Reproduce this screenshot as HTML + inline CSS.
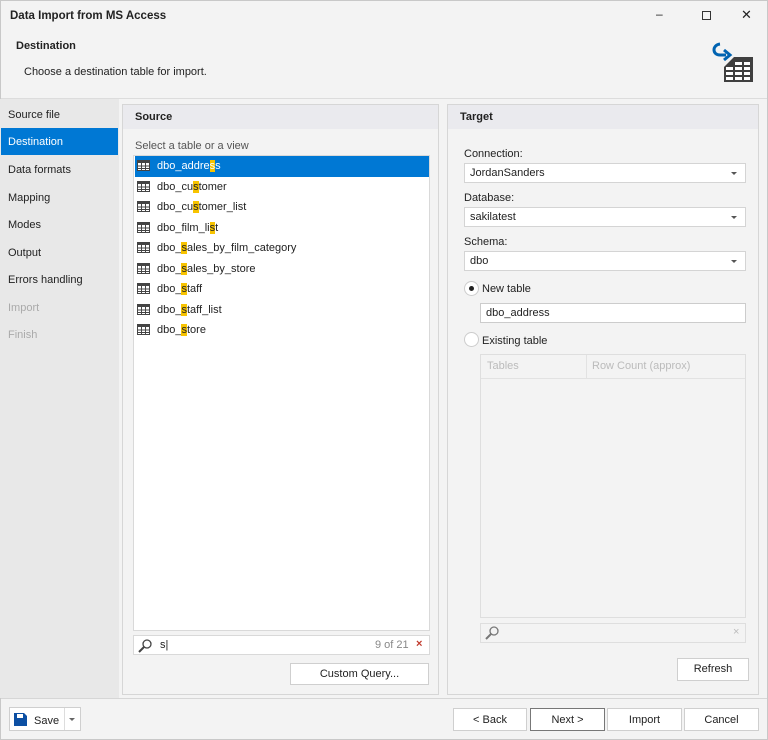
<!DOCTYPE html>
<html><head><meta charset="utf-8"><style>
*{box-sizing:border-box;margin:0;padding:0}
body{width:768px;height:740px;background:#f3f3f3;font-family:"Liberation Sans",sans-serif;font-size:11px;color:#222;position:relative;overflow:hidden}
.a{position:absolute}
.win{left:0;top:0;width:768px;height:740px;border:1px solid #c8c8c8}
.nav div{position:absolute;left:1px;width:117px;height:27px;line-height:27px;padding-left:7px}
.panel{border:1px solid #d6d6d6;background:#f3f3f3}
.ph{background:#eaeaee;height:24px;line-height:24px;padding-left:12px;font-weight:bold}
.box{background:#fff;border:1px solid #d9d9d9}
.btn{background:#fff;border:1px solid #cfcfcf;text-align:center;line-height:20px}
.row{position:absolute;left:1px;width:294px;height:21px;line-height:21px;padding-left:22px}
.row svg{position:absolute;left:2px;top:4px}
.hl{background:#f7c300}
.combo{background:#fff;border:1px solid #d4d4d4;height:20px;line-height:18px;padding-left:5px}
.dd:after{content:"";position:absolute;right:8px;top:8px;border-left:3px solid transparent;border-right:3px solid transparent;border-top:3px solid #555}
.radio{width:15px;height:15px;border-radius:50%;border:1px solid #ccc;background:#fff}
</style></head><body>
<div class="a win"></div>
<div class="a" style="left:10px;top:10px;font-weight:bold;font-size:11.5px">Data Import from MS Access</div>
<div class="a" style="left:656px;top:7px;font-size:12px">–</div>
<div class="a" style="left:702px;top:11px;width:9px;height:9px;border:1px solid #333"></div>
<div class="a" style="left:741px;top:7px;font-size:13px">✕</div>
<div class="a" style="left:16px;top:40px;font-weight:bold">Destination</div>
<div class="a" style="left:24px;top:66px">Choose a destination table for import.</div>
<svg class="a" style="left:710px;top:42px" width="46" height="42" viewBox="0 0 46 42">
<path d="M10 2 C2 3 2 13 10 13 L16 13" fill="none" stroke="#0063b1" stroke-width="3"/>
<path d="M14 8 L20 13 L14 18" fill="none" stroke="#0063b1" stroke-width="3"/>
<path d="M14 25 L24 15 L43 15 L43 40 L14 40 Z" fill="#3f3f3f"/>
<g fill="#fff"><rect x="16" y="25" width="7" height="3"/><rect x="25" y="25" width="7" height="3"/><rect x="34" y="25" width="6" height="3"/><rect x="16" y="30" width="7" height="3"/><rect x="25" y="30" width="7" height="3"/><rect x="34" y="30" width="6" height="3"/><rect x="16" y="35" width="7" height="3"/><rect x="25" y="35" width="7" height="3"/><rect x="34" y="35" width="6" height="3"/><rect x="25" y="20" width="7" height="3"/><rect x="34" y="20" width="6" height="3"/></g>
</svg>
<div class="a" style="left:1px;top:98px;width:766px;height:1px;background:#dcdcdc"></div>
<div class="a nav" style="left:0;top:99px;width:119px;height:599px;background:#e8e8e8">
<div style="top:1px;line-height:31px">Source file</div>
<div style="top:29px;background:#0078d4;color:#fff;line-height:29px">Destination</div>
<div style="top:56px;line-height:30px">Data formats</div>
<div style="top:84px;line-height:30px">Mapping</div>
<div style="top:111px;line-height:30px">Modes</div>
<div style="top:139px;line-height:30px">Output</div>
<div style="top:166px;line-height:30px">Errors handling</div>
<div style="top:194px;color:#aaa;line-height:30px">Import</div>
<div style="top:221px;color:#aaa;line-height:30px">Finish</div>
</div>
<div class="a panel" style="left:122px;top:104px;width:317px;height:591px">
<div class="ph">Source</div></div>
<div class="a" style="left:135px;top:140px;color:#555">Select a table or a view</div>
<div class="a box" style="left:133px;top:155px;width:297px;height:476px">
<svg width="0" height="0" style="position:absolute"><defs><g id="g"><rect x=".5" y=".5" width="12" height="10" fill="#fff" stroke="#444"/><rect x=".5" y=".5" width="12" height="2.5" fill="#444"/><path d="M4.5 3V11M8.5 3V11M1 6H12M1 8.5H12" stroke="#444"/></g></defs></svg>
<div class="row" style="top:0;background:#0078d4;color:#fff"><svg width="14" height="12"><use href="#g"/></svg>dbo_addre<span class="hl">s</span>s</div>
<div class="row" style="top:21px"><svg width="14" height="12"><use href="#g"/></svg>dbo_cu<span class="hl">s</span>tomer</div>
<div class="row" style="top:41px"><svg width="14" height="12"><use href="#g"/></svg>dbo_cu<span class="hl">s</span>tomer_list</div>
<div class="row" style="top:62px"><svg width="14" height="12"><use href="#g"/></svg>dbo_film_li<span class="hl">s</span>t</div>
<div class="row" style="top:82px"><svg width="14" height="12"><use href="#g"/></svg>dbo_<span class="hl">s</span>ales_by_film_category</div>
<div class="row" style="top:103px"><svg width="14" height="12"><use href="#g"/></svg>dbo_<span class="hl">s</span>ales_by_store</div>
<div class="row" style="top:123px"><svg width="14" height="12"><use href="#g"/></svg>dbo_<span class="hl">s</span>taff</div>
<div class="row" style="top:144px"><svg width="14" height="12"><use href="#g"/></svg>dbo_<span class="hl">s</span>taff_list</div>
<div class="row" style="top:164px"><svg width="14" height="12"><use href="#g"/></svg>dbo_<span class="hl">s</span>tore</div>
</div>
<div class="a box" style="left:133px;top:635px;width:297px;height:20px">
<svg class="a" style="left:4px;top:3px" width="14" height="14"><circle cx="9" cy="5" r="4" fill="none" stroke="#444" stroke-width="1.3"/><path d="M6 8L1 13" stroke="#444" stroke-width="2"/></svg>
<span class="a" style="left:26px;top:3px">s|</span>
<span class="a" style="left:241px;top:3px;color:#888">9 of 21</span>
<span class="a" style="left:282px;top:2px;color:#c0392b;font-weight:bold">×</span></div>
<div class="a btn" style="left:290px;top:663px;width:139px;height:22px">Custom Query...</div>

<div class="a panel" style="left:447px;top:104px;width:312px;height:591px">
<div class="ph">Target</div></div>
<div class="a" style="left:464px;top:148px">Connection:</div>
<div class="a combo dd" style="left:464px;top:163px;width:282px">JordanSanders</div>
<div class="a" style="left:464px;top:192px">Database:</div>
<div class="a combo dd" style="left:464px;top:207px;width:282px">sakilatest</div>
<div class="a" style="left:464px;top:236px">Schema:</div>
<div class="a combo dd" style="left:464px;top:251px;width:282px">dbo</div>
<div class="a radio" style="left:464px;top:281px"><div class="a" style="left:4px;top:4px;width:5px;height:5px;border-radius:50%;background:#222"></div></div>
<div class="a" style="left:482px;top:283px">New table</div>
<div class="a combo" style="left:480px;top:303px;width:266px;border-color:#ccc">dbo_address</div>
<div class="a radio" style="left:464px;top:332px"></div>
<div class="a" style="left:482px;top:335px">Existing table</div>
<div class="a" style="left:480px;top:354px;width:266px;height:264px;border:1px solid #dedede;background:#f3f3f3">
<div style="height:24px;border-bottom:1px solid #e2e2e2;color:#bbb;line-height:23px;position:relative"><span style="position:absolute;left:6px">Tables</span><span style="position:absolute;left:105px;top:0;height:23px;border-left:1px solid #e2e2e2"></span><span style="position:absolute;left:111px">Row Count (approx)</span></div></div>
<div class="a" style="left:480px;top:623px;width:266px;height:20px;border:1px solid #dedede;background:#f3f3f3">
<svg class="a" style="left:4px;top:2px" width="14" height="14"><circle cx="9" cy="5" r="4" fill="none" stroke="#777" stroke-width="1.3"/><path d="M6 8L1 13" stroke="#777" stroke-width="2"/></svg>
<span class="a" style="left:252px;top:2px;color:#bbb">×</span></div>
<div class="a btn" style="left:677px;top:658px;width:72px;height:23px">Refresh</div>

<div class="a" style="left:1px;top:698px;width:766px;height:1px;background:#d6d6d6"></div>
<div class="a btn" style="left:9px;top:707px;width:72px;height:24px;text-align:left">
<svg class="a" style="left:4px;top:5px" width="13" height="13"><path d="M0 0H10L13 3V13H0Z" fill="#0c4fa3"/><rect x="3" y="1" width="6" height="4" fill="#fff"/></svg>
<span class="a" style="left:24px;top:3px">Save</span>
<span class="a" style="left:54px;top:0;height:22px;border-left:1px solid #ddd"></span>
<span class="a" style="left:59px;top:10px;border-left:3px solid transparent;border-right:3px solid transparent;border-top:3px solid #666"></span></div>
<div class="a btn" style="left:453px;top:708px;width:74px;height:23px;line-height:22px">&lt; Back</div>
<div class="a btn" style="left:530px;top:708px;width:75px;height:23px;border-color:#777;line-height:22px">Next &gt;</div>
<div class="a btn" style="left:607px;top:708px;width:75px;height:23px;line-height:22px">Import</div>
<div class="a btn" style="left:684px;top:708px;width:75px;height:23px;line-height:22px">Cancel</div>
</body></html>
